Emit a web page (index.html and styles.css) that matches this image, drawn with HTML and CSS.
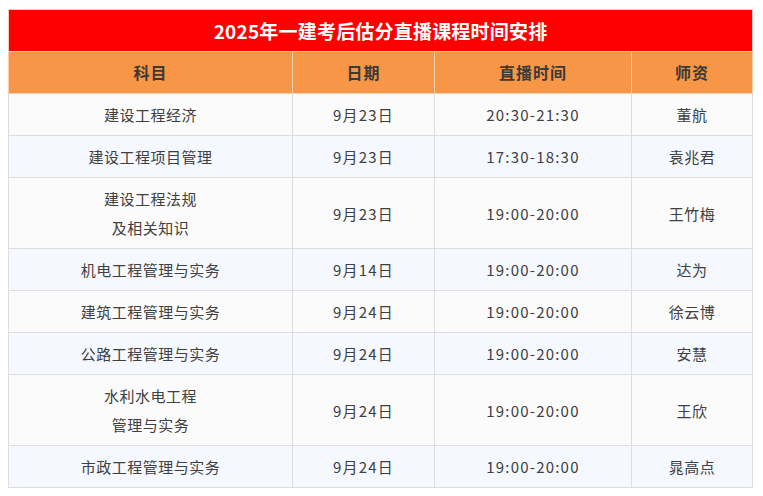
FILE: index.html
```html
<!DOCTYPE html>
<html lang="zh-CN">
<head>
<meta charset="utf-8">
<title>2025年一建考后估分直播课程时间安排</title>
<link rel="stylesheet" href="styles.css">
</head>
<body>
<table class="schedule">
  <colgroup>
    <col class="c1"><col class="c2"><col class="c3"><col class="c4">
  </colgroup>
  <thead>
    <tr class="title-row"><th colspan="4">2025年一建考后估分直播课程时间安排</th></tr>
    <tr class="head-row"><th>科目</th><th>日期</th><th>直播时间</th><th>师资</th></tr>
  </thead>
  <tbody>
    <tr><td>建设工程经济</td><td class="num">9月23日</td><td class="num">20:30-21:30</td><td>董航</td></tr>
    <tr><td>建设工程项目管理</td><td class="num">9月23日</td><td class="num">17:30-18:30</td><td>袁兆君</td></tr>
    <tr><td>建设工程法规<br>及相关知识</td><td class="num">9月23日</td><td class="num">19:00-20:00</td><td>王竹梅</td></tr>
    <tr><td>机电工程管理与实务</td><td class="num">9月14日</td><td class="num">19:00-20:00</td><td>达为</td></tr>
    <tr><td>建筑工程管理与实务</td><td class="num">9月24日</td><td class="num">19:00-20:00</td><td>徐云博</td></tr>
    <tr><td>公路工程管理与实务</td><td class="num">9月24日</td><td class="num">19:00-20:00</td><td>安慧</td></tr>
    <tr><td>水利水电工程<br>管理与实务</td><td class="num">9月24日</td><td class="num">19:00-20:00</td><td>王欣</td></tr>
    <tr><td>市政工程管理与实务</td><td class="num">9月24日</td><td class="num">19:00-20:00</td><td>晁高点</td></tr>
  </tbody>
</table>
</body>
</html>
```
FILE: styles.css
```css
html, body {
  background: #ffffff;
}
body {
  margin: 9px 8px;
  font-family: "Noto Sans CJK SC", "Noto Sans", sans-serif;
  color: #333333;
}
.schedule {
  border-collapse: collapse;
  table-layout: fixed;
  width: 744px;
}
.c1 { width: 284px; }
.c2 { width: 142px; }
.c3 { width: 197px; }
.c4 { width: 121px; }

.schedule th,
.schedule td {
  text-align: center;
  vertical-align: middle;
  padding: 6px 4px;
  line-height: 29px;
}
.title-row th {
  background: #ff0000;
  color: #ffffff;
  font-size: 19px;
  font-weight: 700;
  border: 1px solid #f9c6c0;
  letter-spacing: 0.2px;
}
.head-row th {
  background: #f79646;
  color: #3a3a3a;
  font-size: 16px;
  font-weight: 700;
  border: 1px solid #fbd0ae;
  letter-spacing: 1px;
}
.schedule td {
  font-size: 15px;
  color: #404040;
  border: 1px solid #dddddd;
  letter-spacing: 0.5px;
}
.schedule td.num {
  letter-spacing: 1.2px;
}
.schedule tbody tr:nth-child(odd) td {
  background: #fbfbfb;
}
.schedule tbody tr:nth-child(even) td {
  background: #f5f9ff;
}
```
